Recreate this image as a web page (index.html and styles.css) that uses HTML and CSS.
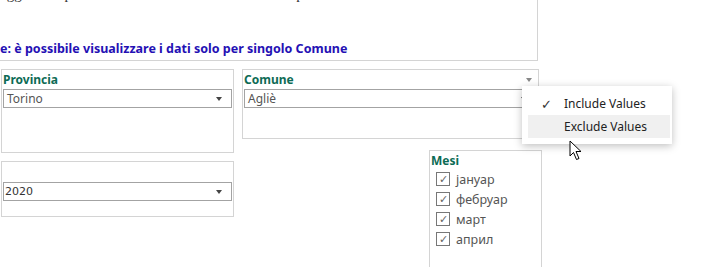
FILE: index.html
```html
<!DOCTYPE html>
<html lang="it">
  <head>
    <meta charset="UTF-8" />
    <meta name="viewport" content="width=device-width, initial-scale=1.0" />
    <title>Dashboard</title>
    <link rel="stylesheet" href="styles.css">
  </head>
  <body>
    <div class="top">
      <p class="top-text">aggiornati per il mese 2020 sulla base dei dati disponibili alla data indicata</p>
      <p class="note">e: è possibile visualizzare i dati solo per singolo Comune</p>
    </div>

    <div class="filters">
      <div class="col-left">
        <div class="panel panel-prov">
          <div class="label">Provincia</div>
          <div class="select"><span>Torino</span><i class="caret"></i></div>
        </div>
        <div class="panel panel-year">
          <div class="select select-year"><span>2020</span><i class="caret"></i></div>
        </div>
      </div>

      <div class="col-right">
        <div class="panel panel-comune">
          <div class="label-row">
            <div class="label">Comune</div>
            <i class="caret caret-menu"></i>
          </div>
          <div class="select"><span>Agliè</span><i class="caret"></i></div>

          <!-- context menu over the panel -->
          <div class="menu">
            <div class="menu-item"><span class="tick">&#10003;</span>Include Values</div>
            <div class="menu-item active"><span class="tick"></span>Exclude Values</div>
          </div>
          <svg class="cursor" width="14" height="21" viewBox="0 0 14 21">
            <path d="M1 1 L1 16 L4.5 12.5 L7.5 19.5 L10 18.5 L7 11.5 L12 11.5 Z" fill="#fff" stroke="#000" stroke-width="1" stroke-linejoin="round"/>
          </svg>
        </div>

        <div class="panel panel-mesi">
          <div class="label">Mesi</div>
          <ul class="checks">
            <li><span class="box">&#10003;</span>јануар</li>
            <li><span class="box">&#10003;</span>фебруар</li>
            <li><span class="box">&#10003;</span>март</li>
            <li><span class="box">&#10003;</span>април</li>
          </ul>
        </div>
      </div>
    </div>
  </body>
</html>
```

FILE: styles.css
```css
body {
  margin: 0;
  font-family: "Noto Sans", "Open Sans", sans-serif;
  background: #fff;
  overflow: hidden;
}
.top {
  width: 537px;
  height: 60px;
  border-right: 1px solid #d4d4d4;
  border-bottom: 1px solid #d4d4d4;
  overflow: hidden;
}
.top-text {
  margin: -14px 0 0 0;
  font-family: "Liberation Serif", serif;
  font-size: 15px;
  line-height: 16px;
  color: #333;
  white-space: nowrap;
}
.note {
  margin: 38px 0 0 0;
  font-size: 12.5px;
  font-weight: bold;
  color: #2410b4;
  white-space: nowrap;
}
.filters {
  display: flex;
  margin-top: 8px;
  padding-left: 1px;
  gap: 8px;
}
.col-left {
  display: flex;
  flex-direction: column;
  gap: 8px;
}
.col-right {
  display: flex;
  flex-direction: column;
}
.panel {
  border: 1px solid #d4d4d4;
  box-sizing: border-box;
  padding: 2px 1px;
}
.label {
  font-size: 12px;
  font-weight: bold;
  color: #0d6b55;
  line-height: 16px;
}
.panel-prov {
  width: 233px;
  height: 84px;
}
.panel-year {
  width: 233px;
  height: 56px;
  padding-top: 19px;
}
.panel-comune {
  width: 297px;
  height: 70px;
  position: relative;
}
.label-row {
  display: flex;
  justify-content: space-between;
  align-items: center;
  padding-right: 5px;
}
.select {
  margin-top: 1px;
  height: 19px;
  box-sizing: border-box;
  border: 1px solid #a3a3a3;
  display: flex;
  align-items: center;
  justify-content: space-between;
  padding: 0 9px 0 3px;
  font-size: 12px;
  color: #555;
}
.select-year {
  font-family: "DejaVu Sans", sans-serif;
  font-size: 11px;
  color: #333;
  padding-left: 1px;
}
.caret {
  width: 0;
  height: 0;
  border-left: 3.5px solid transparent;
  border-right: 3.5px solid transparent;
  border-top: 4px solid #444;
}
.caret-menu {
  border-top-color: #888;
}
.menu {
  position: absolute;
  left: 279px;
  top: 16px;
  width: 150px;
  padding: 6px 0;
  background: #fff;
  box-shadow: 0 2px 8px rgba(0, 0, 0, 0.25);
  z-index: 2;
}
.menu-item {
  display: flex;
  align-items: center;
  height: 23px;
  margin: 0 2px 0 6px;
  font-size: 12px;
  color: #222;
}
.menu-item.active {
  background: #f0f0f0;
}
.tick {
  width: 36px;
  text-align: center;
  font-size: 13px;
  color: #333;
}
.cursor {
  position: absolute;
  left: 326px;
  top: 70px;
  z-index: 3;
}
.panel-mesi {
  width: 113px;
  height: 130px;
  margin-top: 11px;
  margin-left: 187px;
  padding-left: 1px;
}
.checks {
  list-style: none;
  margin: 0 0 0 5px;
  padding: 0;
}
.checks li {
  display: flex;
  align-items: center;
  height: 20px;
  font-size: 12.5px;
  color: #555;
}
.box {
  width: 12px;
  height: 12px;
  border: 1px solid #777;
  margin-right: 6px;
  font-size: 11px;
  line-height: 12px;
  text-align: center;
  color: #666;
}
```
